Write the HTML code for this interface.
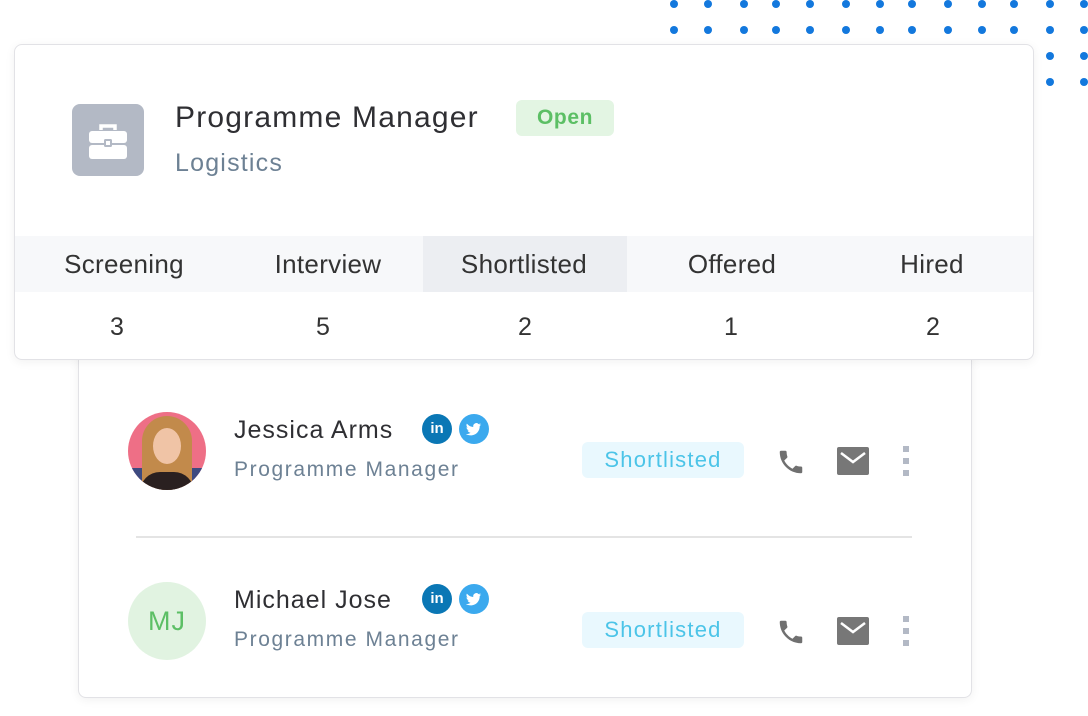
<!DOCTYPE html>
<html><head><meta charset="utf-8"><style>
*{margin:0;padding:0;box-sizing:border-box}
body{width:1088px;height:716px;background:#fff;position:relative;overflow:hidden;font-family:"Liberation Sans",sans-serif}
.a{position:absolute;white-space:nowrap}
.dot{position:absolute;width:8px;height:8px;border-radius:50%;background:#1378dd}
.card{position:absolute;background:#fff;border:1px solid #e2e2e6;border-radius:8px;box-shadow:0 2px 10px rgba(0,0,0,0.06)}
.tab{position:absolute;top:236px;height:56px;line-height:56px;text-align:center;font-size:26px;color:#333;letter-spacing:0.3px}
.cnt{position:absolute;top:313px;font-size:25px;color:#333;text-align:center}
.name{font-size:25px;color:#2f2f33;letter-spacing:1px}
.sub{font-size:21px;color:#6d8194;letter-spacing:1.6px}
.pill{position:absolute;width:162px;height:36px;border-radius:6px;background:#e9f8fe;color:#4bc4e8;font-size:22px;text-align:center;line-height:36px;letter-spacing:1.2px}
.soc{position:absolute;width:30px;height:30px;border-radius:50%}
</style></head><body>
<div id="dots"></div>
<script>
var d=document.getElementById('dots'),xs=[674,708,744,776,810,846,880,912,948,982,1014,1050,1084],ys=[4,30,56,82];
ys.forEach(function(y){xs.forEach(function(x){var e=document.createElement('div');e.className='dot';e.style.left=(x-4)+'px';e.style.top=(y-4)+'px';d.appendChild(e);});});
</script>
<div class="card" style="left:78px;top:340px;width:894px;height:358px"></div>
<div class="card" style="left:14px;top:44px;width:1020px;height:316px;overflow:hidden">
 <div style="position:absolute;left:0;top:191px;width:1020px;height:56px;background:#f7f8fa"></div>
 <div style="position:absolute;left:408px;top:191px;width:204px;height:56px;background:#eceef2"></div>
</div>
<div class="a" style="left:72px;top:104px;width:72px;height:72px;border-radius:8px;background:#b3b9c5">
 <svg width="72" height="72" viewBox="0 0 72 72"><path d="M29 26v-4h14v4" fill="none" stroke="#fff" stroke-width="3.5"/><rect x="17" y="27" width="38" height="12" rx="3" fill="#fff"/><rect x="17" y="41" width="38" height="14" rx="3" fill="#fff"/><rect x="32" y="35" width="8" height="8" rx="1.5" fill="#b3b9c5"/><rect x="34" y="37" width="4" height="4" fill="#fff"/></svg>
</div>
<div class="a" style="left:175px;top:101px;font-size:30px;color:#2f2f33;letter-spacing:1.2px">Programme Manager</div>
<div class="a" style="left:175px;top:149px;font-size:25px;color:#6d8194;letter-spacing:1.2px">Logistics</div>
<div class="a" style="left:516px;top:100px;width:98px;height:36px;border-radius:6px;background:#e3f5e3;color:#5cbf65;font-size:21px;font-weight:bold;text-align:center;line-height:36px;letter-spacing:0.6px">Open</div>
<div class="tab" style="left:14px;width:220px">Screening</div>
<div class="tab" style="left:228px;width:200px">Interview</div>
<div class="tab" style="left:422px;width:204px">Shortlisted</div>
<div class="tab" style="left:630px;width:204px">Offered</div>
<div class="tab" style="left:832px;width:200px">Hired</div>
<div class="cnt" style="left:97px;width:40px">3</div>
<div class="cnt" style="left:303px;width:40px">5</div>
<div class="cnt" style="left:505px;width:40px">2</div>
<div class="cnt" style="left:711px;width:40px">1</div>
<div class="cnt" style="left:913px;width:40px">2</div>

<!-- row 1 -->
<div class="a" style="left:128px;top:412px;width:78px;height:78px;border-radius:50%;overflow:hidden;background:#ee6f86">
 <div style="position:absolute;left:0;top:56px;width:78px;height:22px;background:#3d4a80"></div>
 <div style="position:absolute;left:14px;top:4px;width:50px;height:74px;border-radius:25px 25px 4px 4px;background:#c28a4b"></div>
 <div style="position:absolute;left:25px;top:16px;width:28px;height:36px;border-radius:50%;background:#f0c4a6"></div>
 <div style="position:absolute;left:12px;top:60px;width:54px;height:24px;border-radius:20px 20px 0 0;background:#2a2020"></div>
</div>
<div class="a name" style="left:234px;top:416px">Jessica Arms</div>
<div class="a sub" style="left:234px;top:458px">Programme Manager</div>
<div class="soc" style="left:422px;top:414px;background:#0a77b5;color:#fff;font-size:15px;font-weight:bold;text-align:center;line-height:30px">in</div>
<div class="soc" style="left:459px;top:414px;background:#3ba9ee"><svg width="30" height="30" viewBox="0 0 30 30"><path d="M22 10.5c-.6.3-1.2.4-1.8.5.7-.4 1.1-1 1.4-1.7-.6.4-1.3.6-2 .8a3.1 3.1 0 0 0-5.3 2.8c-2.6-.1-4.9-1.4-6.4-3.3-.8 1.4-.4 3.2 1 4.1-.5 0-1-.2-1.4-.4 0 1.5 1.1 2.8 2.5 3.1-.5.1-.9.2-1.4.1.4 1.3 1.6 2.1 2.9 2.2-1.3 1-3 1.5-4.6 1.3 1.4.9 3.1 1.4 4.8 1.4 5.9 0 9.2-5 9-9.4.6-.4 1.2-1 1.5-1.6z" fill="#fff"/></svg></div>
<div class="pill" style="left:582px;top:442px">Shortlisted</div>
<svg class="a" style="left:776px;top:447px" width="30" height="30" viewBox="0 0 24 24"><path d="M6.6 10.8c1.4 2.8 3.8 5.1 6.6 6.6l2.2-2.2c.3-.3.7-.4 1-.2 1.1.4 2.3.6 3.6.6.6 0 1 .4 1 1V20c0 .6-.4 1-1 1C10.6 21 3 13.4 3 4c0-.6.4-1 1-1h3.5c.6 0 1 .4 1 1 0 1.3.2 2.5.6 3.6.1.3 0 .7-.2 1z" fill="#707070"/></svg>
<svg class="a" style="left:837px;top:447px" width="32" height="28" viewBox="0 0 32 28"><rect x="0" y="0" width="32" height="28" rx="2" fill="#777"/><path d="M4 6l12 9 12-9" fill="none" stroke="#fff" stroke-width="2.5"/></svg>
<div class="a" style="left:903px;top:446px;width:6px;height:30px;background:repeating-linear-gradient(#b3b9c5 0 6px,transparent 6px 12px)"></div>
<div class="a" style="left:136px;top:536px;width:776px;height:2px;background:#e4e4e4"></div>

<!-- row 2 -->
<div class="a" style="left:128px;top:582px;width:78px;height:78px;border-radius:50%;background:#e1f3e1;color:#5cbf65;font-size:27px;text-align:center;line-height:78px;letter-spacing:1px">MJ</div>
<div class="a name" style="left:234px;top:586px">Michael Jose</div>
<div class="a sub" style="left:234px;top:628px">Programme Manager</div>
<div class="soc" style="left:422px;top:584px;background:#0a77b5;color:#fff;font-size:15px;font-weight:bold;text-align:center;line-height:30px">in</div>
<div class="soc" style="left:459px;top:584px;background:#3ba9ee"><svg width="30" height="30" viewBox="0 0 30 30"><path d="M22 10.5c-.6.3-1.2.4-1.8.5.7-.4 1.1-1 1.4-1.7-.6.4-1.3.6-2 .8a3.1 3.1 0 0 0-5.3 2.8c-2.6-.1-4.9-1.4-6.4-3.3-.8 1.4-.4 3.2 1 4.1-.5 0-1-.2-1.4-.4 0 1.5 1.1 2.8 2.5 3.1-.5.1-.9.2-1.4.1.4 1.3 1.6 2.1 2.9 2.2-1.3 1-3 1.5-4.6 1.3 1.4.9 3.1 1.4 4.8 1.4 5.9 0 9.2-5 9-9.4.6-.4 1.2-1 1.5-1.6z" fill="#fff"/></svg></div>
<div class="pill" style="left:582px;top:612px">Shortlisted</div>
<svg class="a" style="left:776px;top:617px" width="30" height="30" viewBox="0 0 24 24"><path d="M6.6 10.8c1.4 2.8 3.8 5.1 6.6 6.6l2.2-2.2c.3-.3.7-.4 1-.2 1.1.4 2.3.6 3.6.6.6 0 1 .4 1 1V20c0 .6-.4 1-1 1C10.6 21 3 13.4 3 4c0-.6.4-1 1-1h3.5c.6 0 1 .4 1 1 0 1.3.2 2.5.6 3.6.1.3 0 .7-.2 1z" fill="#707070"/></svg>
<svg class="a" style="left:837px;top:617px" width="32" height="28" viewBox="0 0 32 28"><rect x="0" y="0" width="32" height="28" rx="2" fill="#777"/><path d="M4 6l12 9 12-9" fill="none" stroke="#fff" stroke-width="2.5"/></svg>
<div class="a" style="left:903px;top:616px;width:6px;height:30px;background:repeating-linear-gradient(#b3b9c5 0 6px,transparent 6px 12px)"></div>
</body></html>
